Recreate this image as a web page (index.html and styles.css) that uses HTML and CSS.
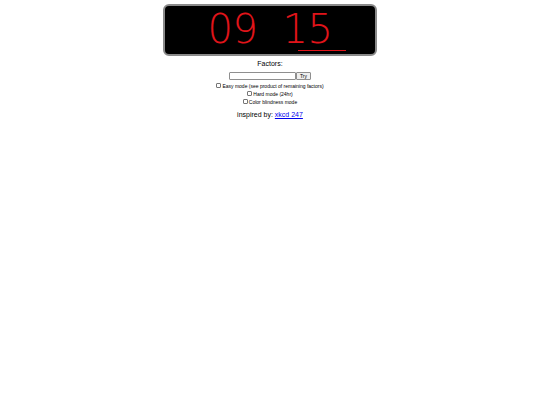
FILE: index.html
```html
<!DOCTYPE html>
<html>
<head>
<meta charset="utf-8">
<link rel="stylesheet" href="styles.css">
</head>
<body>
<div class="page">
  <div class="clock">
    <div class="digits"><span class="ch">0</span><span class="ch">9</span><span class="ch"> </span><span class="ch">1</span><span class="ch">5</span></div>
    <div class="cursor"></div>
  </div>
  <div class="factors">Factors:</div>
  <div class="tryrow">
    <input class="field" type="text">
    <button class="btn">Try</button>
  </div>
  <label class="opt first"><input type="checkbox" class="cb">Easy mode (see product of remaining factors)</label>
  <label class="opt"><input type="checkbox" class="cb">Hard mode (24hr)</label>
  <label class="opt"><input type="checkbox" class="cb">Color blindness mode</label>
  <div class="credit">inspired by: <a href="#" class="link">xkcd 247</a></div>
</div>
</body>
</html>
```
FILE: styles.css
```css
html, body {
  margin: 0;
  padding: 0;
  background: #fff;
}
body {
  font-family: "Liberation Sans", Arial, sans-serif;
  color: #000;
}
.page {
  display: flex;
  flex-direction: column;
  align-items: center;
  padding-top: 4px;
}
.clock {
  position: relative;
  width: 210px;
  height: 48px;
  background: #000;
  border: 2px solid #8a8a8a;
  border-radius: 6px;
  display: flex;
  align-items: center;
  justify-content: center;
}
.digits {
  display: flex;
  font-family: "DejaVu Sans", sans-serif;
  font-weight: 200;
  font-size: 40px;
  color: #e0141a;
  line-height: 1;
  margin-top: -2px;
}
.ch {
  width: 25px;
  text-align: center;
  white-space: pre;
}
.cursor {
  position: absolute;
  left: 133px;
  top: 44px;
  width: 48px;
  height: 1px;
  background: #e0141a;
}
.factors {
  margin-top: 3px;
  font-size: 7px;
  line-height: 9px;
}
.tryrow {
  display: flex;
  align-items: center;
  margin-top: 4px;
  height: 8px;
}
.field {
  box-sizing: border-box;
  width: 67px;
  height: 8px;
  margin: 0;
  padding: 0;
  border: 1px solid #8f8f8f;
  border-radius: 1px;
  background: #fff;
}
.btn {
  box-sizing: border-box;
  height: 8px;
  width: 15px;
  margin: 0;
  padding: 0;
  font-family: "Liberation Sans", Arial, sans-serif;
  font-size: 5px;
  line-height: 6px;
  color: #000;
  background: #efefef;
  border: 1px solid #8f8f8f;
  border-radius: 1px;
}
.opt {
  display: flex;
  align-items: center;
  font-size: 5px;
  line-height: 8px;
  height: 8px;
}
.opt.first {
  margin-top: 2px;
}
.cb {
  appearance: none;
  -webkit-appearance: none;
  box-sizing: border-box;
  width: 5px;
  height: 5px;
  margin: 0 1px 1px 0;
  border: 1px solid #767676;
  border-radius: 1px;
  background: #fff;
}
.credit {
  margin-top: 4px;
  font-size: 7px;
  line-height: 9px;
}
.link {
  color: #0000ee;
  text-decoration: underline;
}
```
